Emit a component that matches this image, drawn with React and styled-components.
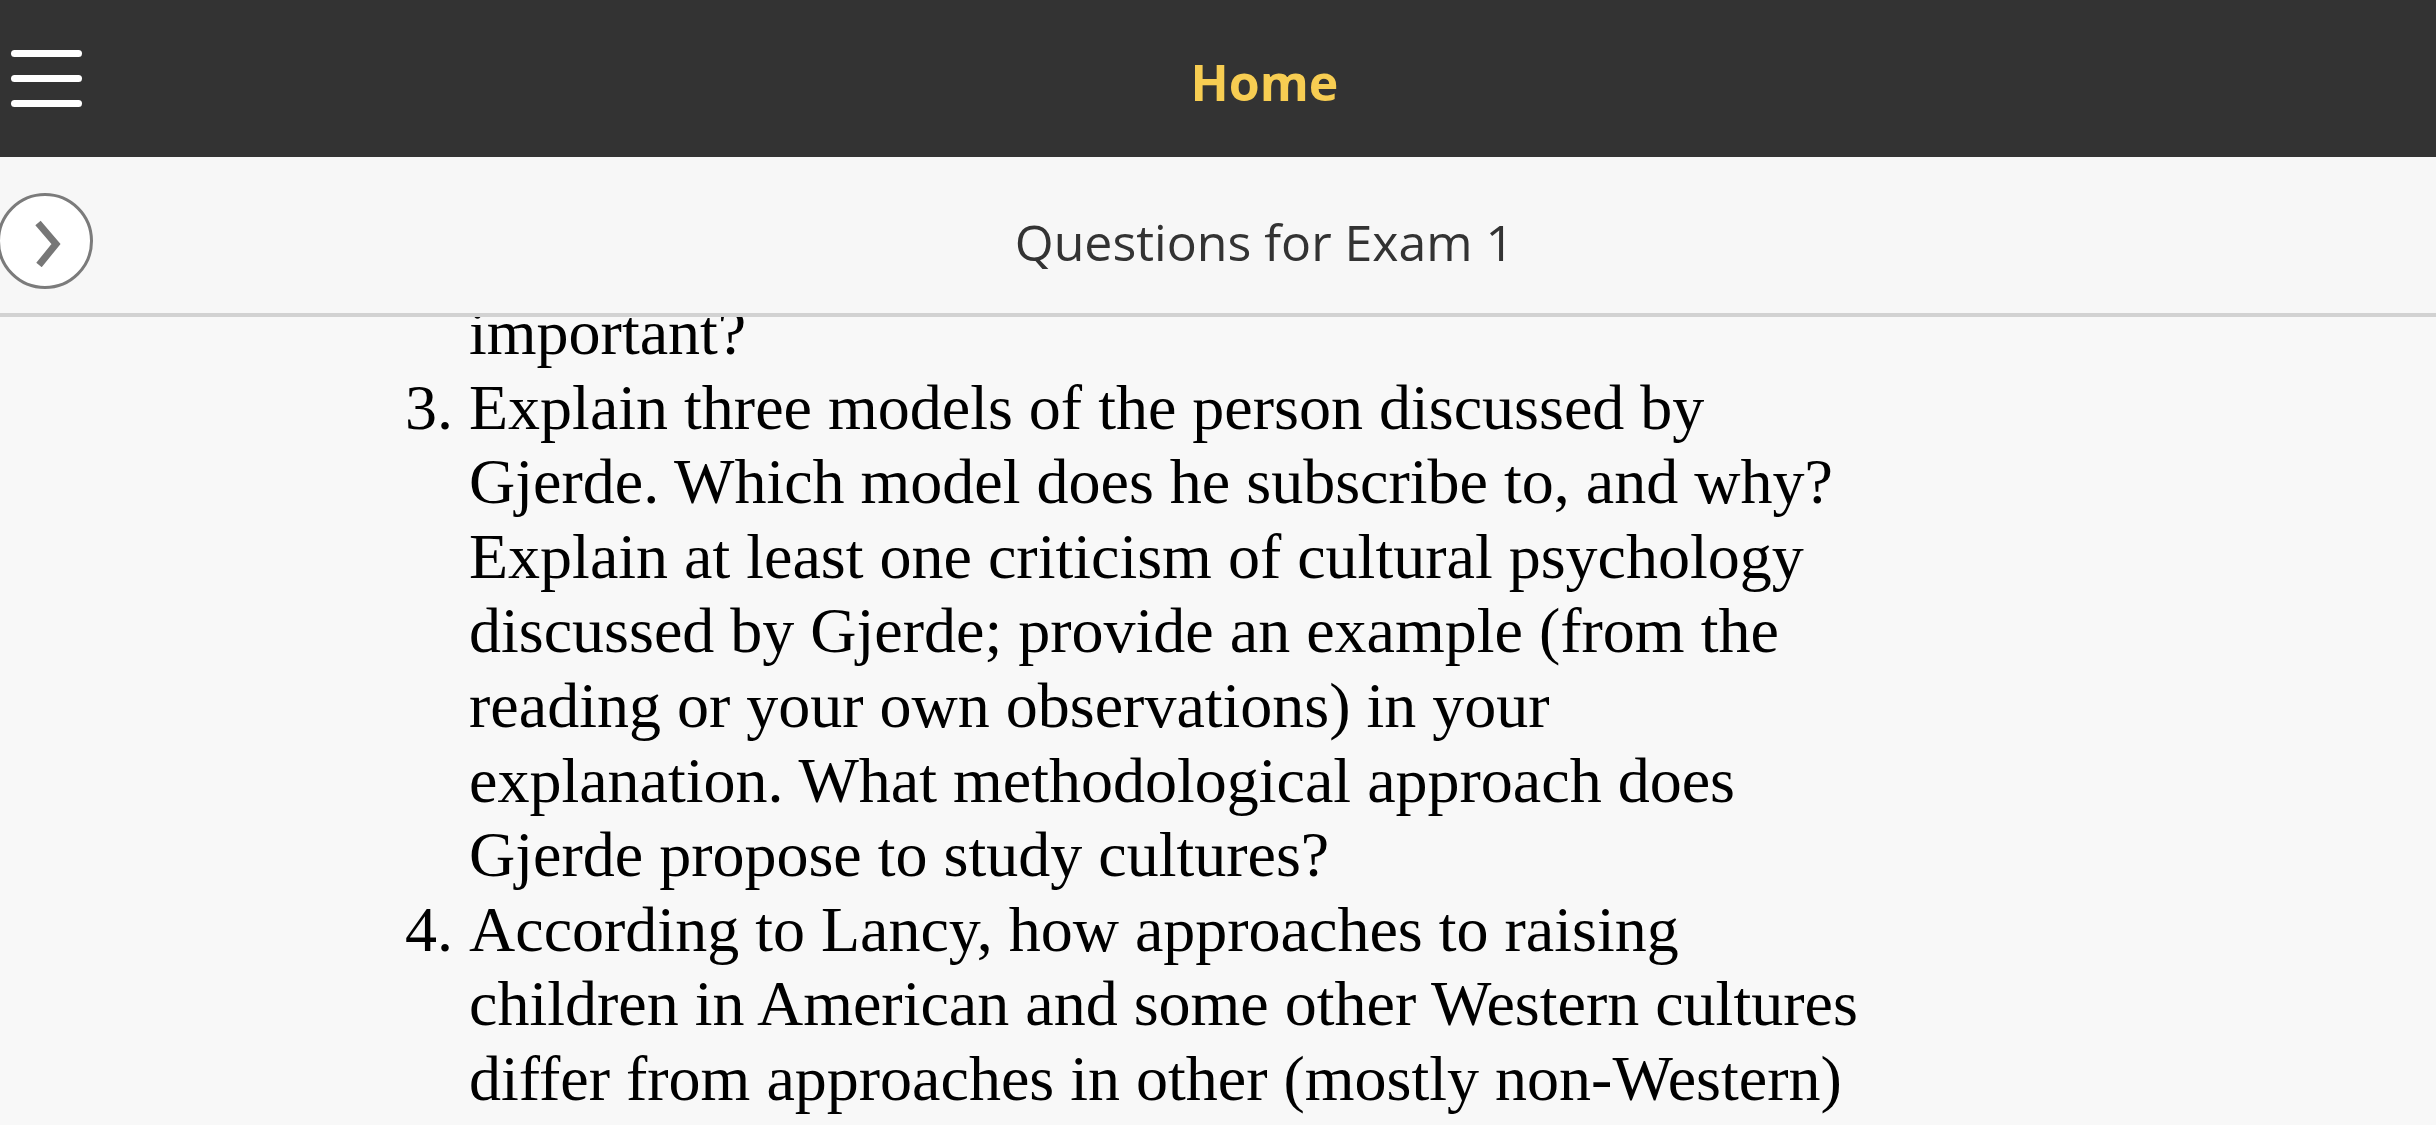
import React from "react";
import styled, { createGlobalStyle } from "styled-components";

const GlobalStyle = createGlobalStyle`
  html, body {
    margin: 0;
    padding: 0;
    background: #f8f8f8;
  }
  #root {
    height: 100vh;
  }
`;

const questions = [
  {
    number: 3,
    text:
      "Explain three models of the person discussed by Gjerde. Which model does he subscribe to, and why? Explain at least one criticism of cultural psychology discussed by Gjerde; provide an example (from the reading or your own observations) in your explanation. What methodological approach does Gjerde propose to study cultures?",
  },
  {
    number: 4,
    text:
      "According to Lancy, how approaches to raising children in American and some other Western cultures differ from approaches in other (mostly non-Western) cultures? What are some of the reasons for these differences?",
  },
];

export default function App() {
  return (
    <>
      <GlobalStyle />
      <Page>
        <TopBar>
          <MenuButton aria-label="Menu">
            <MenuLine />
            <MenuLine />
            <MenuLine />
          </MenuButton>
          <TopTitle>Home</TopTitle>
        </TopBar>
        <SubBar>
          <CircleButton aria-label="Open">
            <svg width="30" height="52" viewBox="0 0 30 52">
              <path
                d="M5 8 L23 29 L6 50"
                fill="none"
                stroke="#777"
                strokeWidth="7"
              />
            </svg>
          </CircleButton>
          <SubTitle>Questions for Exam 1</SubTitle>
        </SubBar>
        <Content>
          {/* scrolled: the end of question 2 sits under the bar */}
          <Scroller>
            <Carry>important?</Carry>
            <QuestionList start={3}>
              {questions.map((q) => (
                <Question key={q.number}>{q.text}</Question>
              ))}
            </QuestionList>
          </Scroller>
        </Content>
      </Page>
    </>
  );
}

const Page = styled.div`
  height: 100vh;
  display: flex;
  flex-direction: column;
  overflow: hidden;
  background: #f8f8f8;
`;

const TopBar = styled.div`
  height: 157px;
  flex-shrink: 0;
  display: flex;
  align-items: center;
  background-color: #333333;
`;

const MenuButton = styled.button`
  width: 93px;
  height: 157px;
  padding: 0 0 0 11px;
  border: 0;
  background: none;
  display: flex;
  flex-direction: column;
  justify-content: center;
  gap: 18px;
  cursor: pointer;
`;

const MenuLine = styled.span`
  display: block;
  width: 71px;
  height: 7px;
  border-radius: 4px;
  background: #ffffff;
`;

const TopTitle = styled.div`
  flex: 1;
  text-align: center;
  font-family: "Open Sans", sans-serif;
  font-weight: 700;
  font-size: 50px;
  color: #f7cd52;
  padding-top: 6px;
`;

const SubBar = styled.div`
  height: 160px;
  box-sizing: border-box;
  padding-top: 12px;
  flex-shrink: 0;
  display: flex;
  align-items: center;
  background-color: #f7f7f7;
  border-bottom: 4px solid #d2d2d2;
`;

const CircleButton = styled.button`
  width: 96px;
  height: 96px;
  margin-left: -3px;
  flex-shrink: 0;
  border-radius: 50%;
  border: 3px solid #7b7b7b;
  background: #ffffff;
  display: flex;
  align-items: center;
  justify-content: center;
  padding: 0 0 0 6px;
  cursor: pointer;
`;

const SubTitle = styled.div`
  flex: 1;
  text-align: center;
  font-family: "Open Sans", sans-serif;
  font-weight: 400;
  font-size: 50px;
  color: #333333;
  padding-top: 1px;
`;

const Content = styled.div`
  flex: 1;
  overflow: hidden;
`;

const Scroller = styled.div`
  margin-top: -21px;
  padding-left: 469px;
  width: 1400px;
  font-family: "Liberation Serif", "Times New Roman", serif;
  font-size: 64px;
  line-height: 74.6px;
  color: #000000;
`;

const Carry = styled.div``;

const QuestionList = styled.ol`
  margin: 0;
  padding: 0;
`;

const Question = styled.li``;
